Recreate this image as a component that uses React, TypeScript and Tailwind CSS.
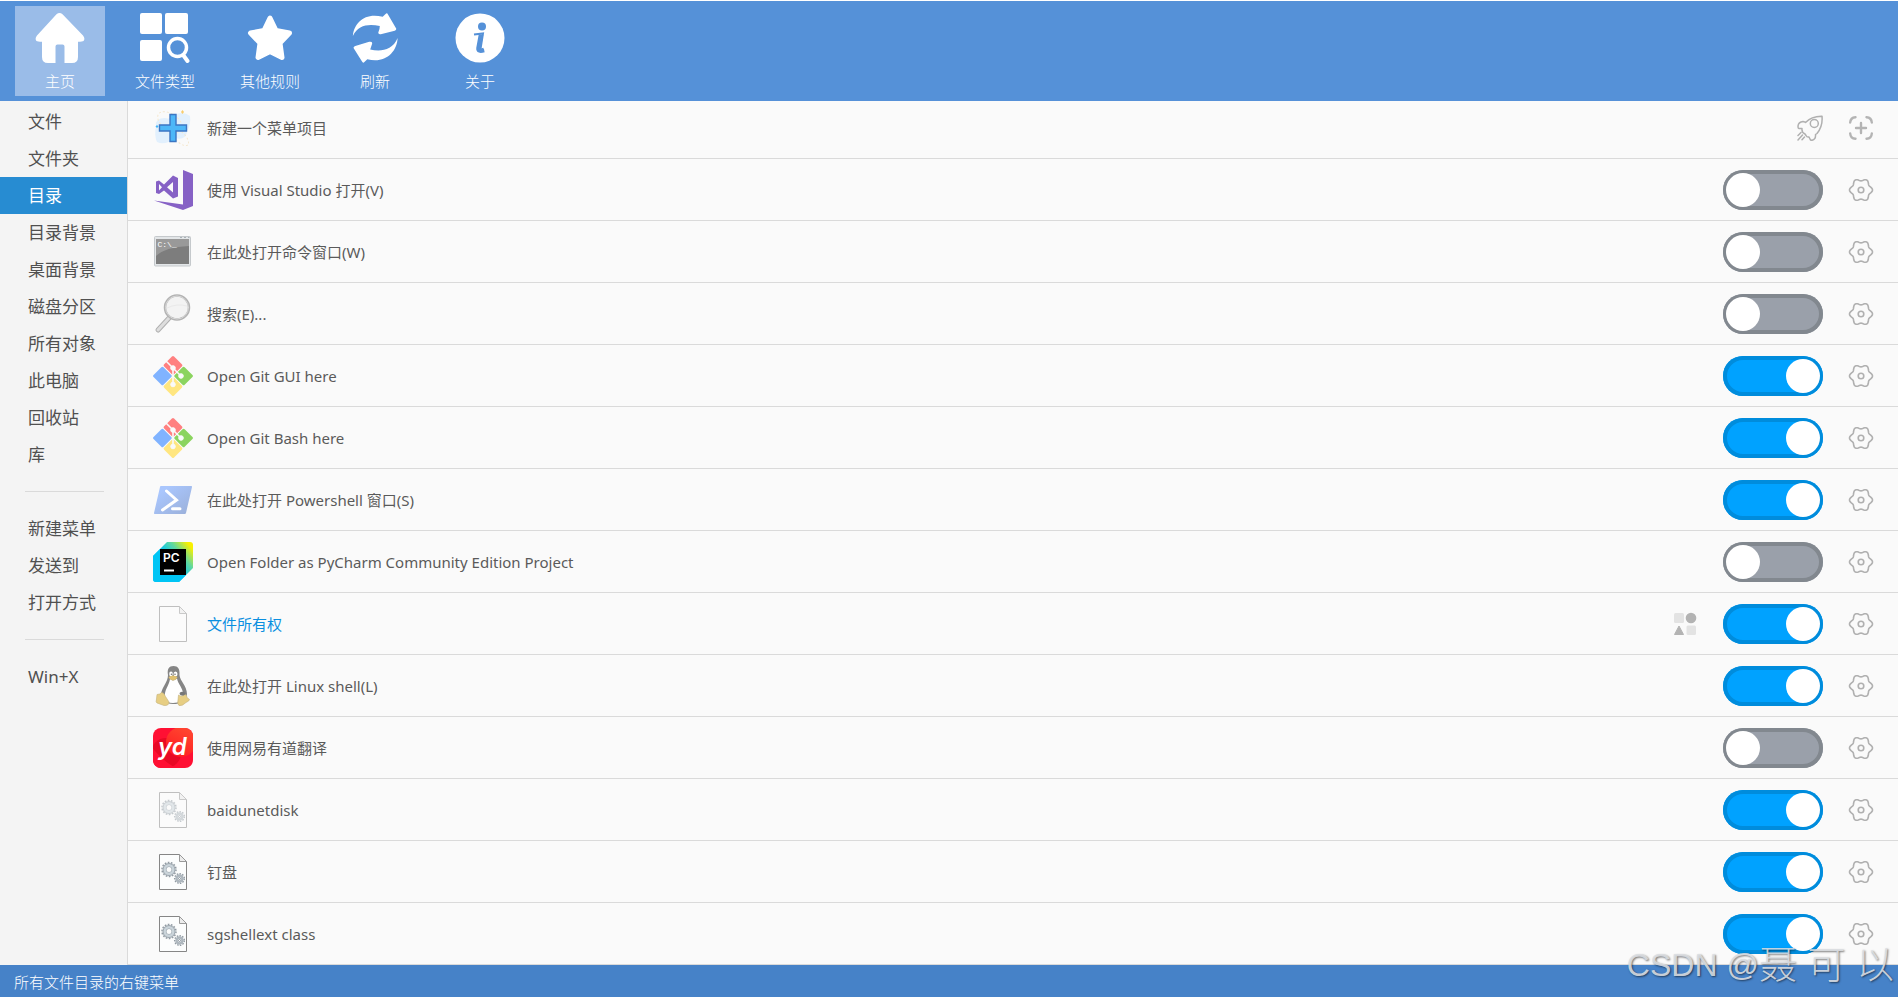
import { useState } from "react";
import type { ReactNode } from "react";

function HomeIcon() {
  return (
    <svg viewBox="0 0 50 50" className="size-[50px]" fill="white">
      <path d="M21.5 1.2Q24.5-1.2 27.5 1.2L48 22.5Q50.5 25.5 48.5 28Q47.5 28.8 43 28.8V44Q43 50 37 50H29.5V33.5Q29.5 31.5 27.5 31.5H22.5Q20.5 31.5 20.5 33.5V50H13Q7 50 7 44V28.8Q2.5 28.8 1.5 28Q-.5 25.5 2 22.5Z" />
    </svg>
  );
}

function TypesIcon() {
  return (
    <svg viewBox="0 0 50 50" className="size-[50px]" fill="white">
      <rect x="0" y="0" width="22" height="21" rx="2" />
      <rect x="25" y="0" width="23" height="21" rx="2" />
      <rect x="0" y="27" width="22" height="21" rx="2" />
      <ellipse cx="37.5" cy="34.5" rx="9" ry="9" fill="none" stroke="white" strokeWidth="3.5" />
      <path d="M43.5 42.5L47.5 48" stroke="white" strokeWidth="4" strokeLinecap="round" />
    </svg>
  );
}

function StarIcon() {
  return (
    <svg viewBox="0 0 50 50" className="size-[50px]" fill="white" stroke="white" strokeWidth="5" strokeLinejoin="round">
      <path d="M25 5L31 17.5L44.5 20L35 30L37 44.5L25 38.5L13 44.5L15 30L5.5 20L19 17.5Z" />
    </svg>
  );
}

function RefreshIcon() {
  return (
    <svg viewBox="0 0 48 52" className="h-[50px] w-[48px]" fill="white">
      <path d="M1 24C2 10 14-1 32 4L35 1Q36.5-.5 37.5 1.5L46 16Q46.5 18 44.5 18.5L30 22Q27 22.5 27.5 20Q29 17 29 13.5C18 11 6 12 1 24Z" />
      <path d="M47.5 26C47 41 34 53 16 48L13 51Q11.5 52.5 10.5 50.5L2 37Q1 35 3.5 34.3L18 30Q21.5 29.5 21 32L19 38C30 40.5 42 39 47.5 26Z" />
    </svg>
  );
}

function AboutIcon() {
  return (
    <svg viewBox="0 0 50 50" className="size-[50px]">
      <circle cx="25" cy="25" r="24.5" fill="white" />
      <circle cx="27" cy="13.5" r="4" fill="#5591d8" />
      <path d="M19 21.5L28 20.5L25.5 36Q25.5 38.5 29 36.5" fill="none" stroke="#5591d8" strokeWidth="2" />
      <path d="M26 21.5L23.5 35Q23 39 29 37" fill="none" stroke="#5591d8" strokeWidth="4.5" />
    </svg>
  );
}

function NewItemIcon() {
  return (
    <svg viewBox="0 0 40 40" className="size-10">
      <path d="M3 18Q2 10 12 10Q21 12 24 6Q31 3 37 8Q38 16 34 24Q32 33 22 30Q12 38 4 34Q1 28 3 18Z" fill="#e2f0fd" />
      <ellipse cx="17" cy="14" rx="14" ry="8" transform="rotate(35 17 14)" fill="none" stroke="#f5e8d0" strokeDasharray="2 2" />
      <ellipse cx="27" cy="29" rx="11" ry="5" transform="rotate(45 27 29)" fill="none" stroke="#f5e8d0" strokeDasharray="2 2" />
      <path d="M4 17l1.5 1.5L4 20l-1.5-1.5z" fill="#42b4f8" />
      <path d="M29.5 2l1.5 2l-1.5 2l-1.5-2z" fill="#f8cc6b" />
      <path d="M17 6.5H23V17H33.5V23H23V33.5H17V23H6.5V17H17Z" fill="#4db7f8" stroke="#3c76c3" strokeWidth="1.4" />
    </svg>
  );
}

function VisualStudioIcon() {
  return (
    <svg viewBox="0 0 40 40" className="size-10" fill="#8661c5">
      <path d="M30 0L40 4V36L30 40L1 30.5L30 34.5Z" />
      <path fillRule="evenodd" d="M3 11.5L6 10.5L11 14.5L20 5.5L25 8V26.5L20 28.5L11 20.5L6 24L3 23ZM6 14V20.5L9 17.2ZM20 12L14 17.2L20 22.5Z" />
    </svg>
  );
}

function CommandIcon() {
  return (
    <svg viewBox="0 0 40 40" className="size-10">
      <rect x="1.5" y="4.5" width="36" height="29.5" rx="1" fill="#e3e6e8" stroke="#c5c9cc" />
      <path d="M27 5.5h2M31 5.5h2M35 5.5h1.5" stroke="#a9b2b8" />
      <rect x="3" y="7" width="33" height="25" fill="#7d7d7d" />
      <path d="M3 7H36V14Q12 15 3 24Z" fill="#999999" />
      <text x="4.5" y="15" fontSize="8" fontFamily="Liberation Mono" fill="white">C:\_</text>
    </svg>
  );
}

function SearchIcon() {
  return (
    <svg viewBox="0 0 40 40" className="size-10" fill="none" strokeLinecap="round">
      <path d="M17 23L5 36" stroke="#b0b0b0" strokeWidth="5" />
      <path d="M16 24L5 36" stroke="#dedede" strokeWidth="3" />
      <circle cx="24" cy="13.5" r="12" fill="#f3f3f3" stroke="#b3b3b3" strokeWidth="2.5" />
      <circle cx="24" cy="13.5" r="11.5" stroke="#d9d9d9" />
      <path d="M14 14Q24 9 34 12" stroke="#e9e9e9" />
    </svg>
  );
}

function GitIcon() {
  return (
    <svg viewBox="0 0 40 40" className="size-10">
      <g transform="rotate(45 20 20)">
        <rect x="5.5" y="5.5" width="14" height="14" rx="1.5" fill="#ff8080" />
        <rect x="20.5" y="5.5" width="14" height="14" rx="1.5" fill="#8bd45f" />
        <rect x="20.5" y="20.5" width="14" height="14" rx="1.5" fill="#ffe680" />
        <rect x="5.5" y="20.5" width="14" height="14" rx="1.5" fill="#80b3ff" />
      </g>
      <g fill="#fafafa" stroke="#fafafa">
        <path d="M12 4L20 12V28M20 12L28 20" fill="none" strokeWidth="1.6" />
        <circle cx="20" cy="12" r="2.3" />
        <circle cx="28" cy="20" r="2.3" />
        <circle cx="20" cy="28.5" r="2.3" />
      </g>
    </svg>
  );
}

function PowershellIcon() {
  return (
    <svg viewBox="0 0 40 40" className="size-10">
      <defs>
        <linearGradient id="ps" x1="0" y1="0" x2="1" y2="1">
          <stop offset="0.2" stopColor="#a9c6fd" />
          <stop offset="1" stopColor="#9aafd8" />
        </linearGradient>
      </defs>
      <path d="M8 6H38.5Q39 6 39 7L33 33Q32.5 34 32 34H1.5Q1 34 1 33L7 7Q7 6 8 6Z" fill="url(#ps)" />
      <path d="M13.5 11L23.5 20L9.5 30M19.5 28.7H27" fill="none" stroke="white" strokeWidth="3" strokeLinecap="round" />
    </svg>
  );
}

function PycharmIcon() {
  return (
    <svg viewBox="0 0 40 40" className="size-10">
      <defs>
        <linearGradient id="pc" x1="0.35" y1="0.5" x2="0.95" y2="0">
          <stop offset="0.1" stopColor="#07c3f2" />
          <stop offset="0.5" stopColor="#5fd8a0" />
          <stop offset="0.9" stopColor="#f8f000" />
        </linearGradient>
      </defs>
      <path d="M14 0H37Q40 0 40 3V26L26 40H3Q0 40 0 37V14Z" fill="url(#pc)" />
      <path d="M0 14L7 7V33H33L26 40H3Q0 40 0 37Z" fill="#00c5f5" />
      <rect x="7" y="7" width="26" height="26" fill="black" />
      <text x="10" y="20" fontSize="12" fontWeight="600" fontFamily="Inter" fill="white">PC</text>
      <path d="M11 28.5H21" stroke="white" strokeWidth="2" />
    </svg>
  );
}

function PageIcon({ gears = false, faded = false }: { gears?: boolean; faded?: boolean }) {
  return (
    <svg viewBox="0 0 40 40" className={faded ? "size-10 opacity-50" : "size-10"}>
      <path d="M6.5 2.5H26.5L33.5 9.5V37.5H6.5Z" fill="#fcfdfd" stroke="#868686" />
      <path d="M26.5 2.5V9.5H33.5Z" fill="#ececec" stroke="#9a9a9a" />
      {gears && (
        <g fill="none">
          <circle cx="16" cy="17.5" r="7" stroke="#929ba3" strokeWidth="1.5" strokeDasharray="1.7 1.45" />
          <circle cx="16" cy="17.5" r="4.5" stroke="#9aa4ac" strokeWidth="4" />
          <circle cx="16" cy="17.5" r="4.3" stroke="#cad4da" strokeWidth="2.5" />
          <circle cx="26.5" cy="26.5" r="4.8" stroke="#929ba3" strokeWidth="1.5" strokeDasharray="1.5 1.25" />
          <circle cx="26.5" cy="26.5" r="3" stroke="#aeb7be" strokeWidth="2.5" />
          <circle cx="26.5" cy="26.5" r="1" stroke="#8b959d" />
        </g>
      )}
    </svg>
  );
}

function LinuxIcon() {
  return (
    <svg viewBox="0 0 40 40" className="size-10">
      <path d="M15 9C14 3 16 0 20.5 0C25 0 27 3 26.5 9C27 15 34 20 34 28C33 36 28 38 20 38C12 38 8 34 8 28C9 21 15 16 15 9Z" fill="#858585" />
      <path d="M17 13Q20 16 24 12.5C25 18 30 22 30 28Q30 37 20 37Q13 37 12 31C11 24 16 20 17 13Z" fill="white" />
      <ellipse cx="18" cy="8" rx="1.8" ry="2.4" fill="white" />
      <ellipse cx="22.5" cy="8" rx="2" ry="2.6" fill="white" />
      <circle cx="18.5" cy="8.3" r="0.8" fill="#777777" />
      <circle cx="22" cy="8.3" r="0.8" fill="#777777" />
      <path d="M15.5 11Q20 8 24.5 11Q23 14.5 19.5 14.5Q16.5 14 15.5 11Z" fill="#dfc171" />
      <path d="M4 28.5Q7 28.5 8.5 26.5Q11 26.5 12.5 30.5L16 36Q16 40 11 39.5L4 37Q2.5 36.5 3.5 33Z" fill="#e7ce83" stroke="#c5b27d" strokeWidth="0.6" />
      <path d="M25.5 29Q28 31.5 32 28.5Q34 29 34 31.5L36.5 33.5Q36.5 35 33 36.5Q29 40.5 26 39.5Q24 38 25 34Z" fill="#e7ce83" stroke="#c5b27d" strokeWidth="0.6" />
      <path d="M26.5 27Q29 24.5 32.5 27Q32 30 28.5 29.5Q26.5 29 26.5 27Z" fill="#777777" />
    </svg>
  );
}

function YoudaoIcon() {
  return (
    <svg viewBox="0 0 40 40" className="size-10">
      <defs>
        <clipPath id="yd-clip">
          <rect width="40" height="40" rx="8" />
        </clipPath>
        <linearGradient id="yd-glow" x1="0" y1="1" x2="0.5" y2="0">
          <stop offset="0" stopColor="#ff1620" />
          <stop offset="1" stopColor="#ff452f" />
        </linearGradient>
      </defs>
      <g clipPath="url(#yd-clip)">
        <rect width="40" height="40" fill="#ff1033" />
        <circle cx="13" cy="25" r="15" fill="#e80925" />
        <path d="M-4 16Q12 36 24 40H-4Z" fill="#ff1033" />
        <circle cx="28" cy="14" r="15" fill="url(#yd-glow)" />
      </g>
      <text x="5" y="27" fontSize="24" fontWeight="600" fontStyle="italic" fontFamily="Inter" fill="white">yd</text>
    </svg>
  );
}

// six soft lobes around the hub
const gearPath =
  Array.from({ length: 72 }, (_, i) => {
    const a = (i * Math.PI) / 36;
    const r = 10.3 + 1.2 * Math.cos(6 * a);
    return `${i ? "L" : "M"}${(12 + r * Math.cos(a)).toFixed(2)} ${(12 + r * Math.sin(a)).toFixed(2)}`;
  }).join("") + "Z";

function GearIcon() {
  return (
    <svg viewBox="0 0 24 24" className="size-6 overflow-visible" fill="none" stroke="#b0b0b0" strokeWidth="1.6" strokeLinejoin="round">
      <path d={gearPath} />
      <circle cx="12" cy="12" r="2.8" />
    </svg>
  );
}

function RocketIcon() {
  return (
    <svg viewBox="0 0 26 26" className="size-[26px]" fill="none" stroke="#b0b0b0" strokeWidth="1.5" strokeLinecap="round" strokeLinejoin="round">
      <path d="M25 1.2Q26 11 20 18.5L18.5 19.5Q19 24.5 15 25.3Q13.5 25.5 13 24L12 22Q10 22.5 9 20.5L8 19Q4.5 17.5 5 13.5L2 13.5Q1 13.5 1 11Q1.5 7 6 6.5Q7 6.5 8.5 7.5Q14.5 1 25 1.2Z" />
      <circle cx="17.3" cy="8.5" r="4" />
      <path d="M4 17.5L1 20.5M5.5 20L1 25M7.5 22L5 24.8" />
    </svg>
  );
}

function AddFrameIcon() {
  return (
    <svg viewBox="0 0 24 24" className="size-6" fill="none" stroke="#b4b4b4" strokeWidth="2.4" strokeLinecap="round">
      <path d="M1.2 6.5Q1.5 1.5 6.5 1.2M17.5 1.2Q22.5 1.5 22.8 6.5M22.8 17.5Q22.5 22.5 17.5 22.8M6.5 22.8Q1.5 22.5 1.2 17.5M12 7V17M7 12H17" />
    </svg>
  );
}

function ShapesIcon() {
  return (
    <svg viewBox="0 0 24 24" className="size-6">
      <rect x="1" y="1" width="10" height="10" rx="1.5" fill="#e3e3e3" />
      <circle cx="18" cy="6" r="5.3" fill="#b3b3b3" />
      <path d="M6 14L10.5 22.5H1.5Z" fill="#b3b3b3" stroke="#b3b3b3" strokeLinejoin="round" />
      <rect x="13.5" y="13.5" width="9.5" height="9.5" rx="1.5" fill="#e3e3e3" />
    </svg>
  );
}

const tabs: { label: string; icon: ReactNode }[] = [
  { label: "主页", icon: <HomeIcon /> },
  { label: "文件类型", icon: <TypesIcon /> },
  { label: "其他规则", icon: <StarIcon /> },
  { label: "刷新", icon: <RefreshIcon /> },
  { label: "关于", icon: <AboutIcon /> },
];

const sideGroups = [
  ["文件", "文件夹", "目录", "目录背景", "桌面背景", "磁盘分区", "所有对象", "此电脑", "回收站", "库"],
  ["新建菜单", "发送到", "打开方式"],
  ["Win+X"],
];

interface MenuEntry {
  label: string;
  icon: ReactNode;
  on: boolean;
  group?: boolean;
}

const entries: MenuEntry[] = [
  { label: "使用 Visual Studio 打开(V)", icon: <VisualStudioIcon />, on: false },
  { label: "在此处打开命令窗口(W)", icon: <CommandIcon />, on: false },
  { label: "搜索(E)...", icon: <SearchIcon />, on: false },
  { label: "Open Git GUI here", icon: <GitIcon />, on: true },
  { label: "Open Git Bash here", icon: <GitIcon />, on: true },
  { label: "在此处打开 Powershell 窗口(S)", icon: <PowershellIcon />, on: true },
  { label: "Open Folder as PyCharm Community Edition Project", icon: <PycharmIcon />, on: false },
  { label: "文件所有权", icon: <PageIcon faded />, on: true, group: true },
  { label: "在此处打开 Linux shell(L)", icon: <LinuxIcon />, on: true },
  { label: "使用网易有道翻译", icon: <YoudaoIcon />, on: false },
  { label: "baidunetdisk", icon: <PageIcon gears faded />, on: true },
  { label: "钉盘", icon: <PageIcon gears />, on: true },
  { label: "sgshellext class", icon: <PageIcon gears />, on: true },
];

function EntryRow({ entry, id }: { entry: MenuEntry; id: string }) {
  const [on, setOn] = useState(entry.on);
  return (
    <li className="flex h-[62px] items-center border-b border-[#dadada] px-[25px]">
      {entry.icon}
      <label htmlFor={id} className={entry.group ? "ml-3.5 pt-0.5 text-[#0a8fe0]" : "ml-3.5 pt-0.5"}>
        {entry.label}
      </label>
      <div className="ml-auto flex items-center gap-[26px]">
        {entry.group && (
          <button type="button" aria-label="子菜单">
            <ShapesIcon />
          </button>
        )}
        <input
          id={id}
          type="checkbox"
          role="switch"
          checked={on}
          onChange={() => setOn(!on)}
          className="flex h-10 w-[100px] appearance-none rounded-full bg-[#9aa0aa] p-[3px] inset-ring-4 inset-ring-[#82888f] before:size-[34px] before:rounded-full before:bg-white checked:justify-end checked:bg-[#00a2ff] checked:inset-ring-[#008cdc]"
        />
        <button type="button" aria-label="设置">
          <GearIcon />
        </button>
      </div>
    </li>
  );
}

export default function App() {
  const [side, setSide] = useState("目录");

  return (
    <div className="relative flex min-h-screen flex-col bg-[#fafafa] font-['Noto_Sans','Noto_Sans_CJK_SC',sans-serif] text-[15px] text-[#5a5a5a]">
      <header className="border-t border-white bg-[#5591d8]">
        <nav className="flex gap-[15px] px-[15px] py-[5px] font-light text-white">
          {tabs.map((tab, i) => (
            <button
              key={tab.label}
              type="button"
              className={
                i === 0
                  ? "flex h-[90px] w-[90px] flex-col items-center bg-[#9abce8] pt-[7px]"
                  : "flex h-[90px] w-[90px] flex-col items-center pt-[7px]"
              }
            >
              {tab.icon}
              <span className="mt-[7px] leading-[22px]">{tab.label}</span>
            </button>
          ))}
        </nav>
      </header>

      <div className="flex flex-1">
        <aside className="w-32 shrink-0 border-r border-[#dadada] bg-[#f4f4f4] pt-0.5 text-[17px] text-[#505050]">
          {sideGroups.map((group, i) => (
            <div key={group[0]}>
              {i > 0 && <hr className="my-[18px] mr-[23px] ml-[25px] border-[#dadada]" />}
              {group.map((item) => (
                <button
                  key={item}
                  type="button"
                  onClick={() => setSide(item)}
                  className={
                    item === side
                      ? "block h-[37px] w-full bg-[#278cd2] pl-7 text-left text-white"
                      : "block h-[37px] w-full pl-7 text-left"
                  }
                >
                  {item}
                </button>
              ))}
            </div>
          ))}
        </aside>

        <main className="flex-1">
          <ul>
            <li className="flex h-[58px] items-center border-b border-[#dadada] px-[25px] pb-1">
              <NewItemIcon />
              <span className="ml-3.5 pt-0.5">新建一个菜单项目</span>
              <div className="ml-auto flex items-center gap-[26px]">
                <button type="button" aria-label="快速启动">
                  <RocketIcon />
                </button>
                <button type="button" aria-label="添加">
                  <AddFrameIcon />
                </button>
              </div>
            </li>
            {entries.map((entry, i) => (
              <EntryRow key={entry.label} entry={entry} id={`entry-${i}`} />
            ))}
          </ul>
        </main>
      </div>

      <footer className="flex h-8 items-center bg-[#4682c8] px-3.5 pt-0.5 font-light text-white">所有文件目录的右键菜单</footer>

      <div className="pointer-events-none absolute right-1 bottom-2 flex items-center font-['Liberation_Sans','Noto_Sans_CJK_SC',sans-serif] text-[32px] leading-12 font-light whitespace-pre text-[#dcdfe3]/90 text-shadow-[1px_1px_2px_#00000088]">
        CSDN @<span className="text-[38px]">聂 可 以</span>
      </div>
    </div>
  );
}
